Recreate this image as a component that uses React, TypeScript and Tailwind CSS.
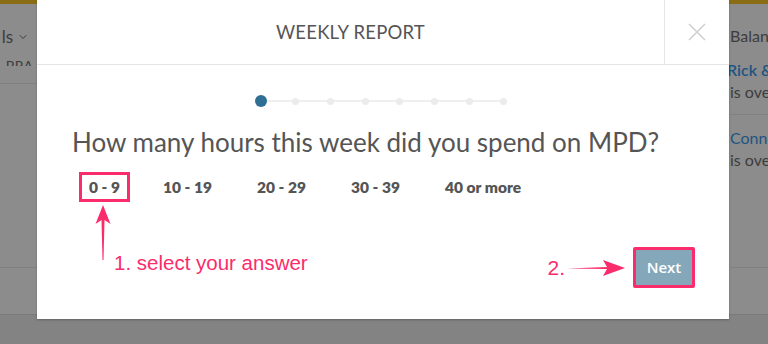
import { ChevronDown } from 'lucide-react'

const options = ['0 - 9', '10 - 19', '20 - 29', '30 - 39', '40 or more']
const steps = [0, 1, 2, 3, 4, 5, 6, 7]

const PINK = '#fb2c6c'

export default function App() {
  return (
    <div className="relative w-[768px] h-[344px] overflow-hidden bg-[#8c8c8c] font-['Lato',sans-serif]">
      {/* page behind the overlay */}
      <div className="h-[4px] bg-[#8a6c12]" />
      <div className="flex h-[310px]">
        <div className="w-[37px] flex flex-col items-end overflow-hidden">
          <div className="flex items-center gap-1 mt-[20px] pr-[8px] text-[17px] text-[#3d3d3d] whitespace-nowrap">
            ls <ChevronDown className="w-3 h-3" strokeWidth={2} />
          </div>
          <div className="h-[8px] mt-[8px] overflow-hidden text-[14px] text-[#3d3d3d] whitespace-nowrap pr-[4px] leading-[16px]">BRA</div>
          <div className="w-full border-b border-[#808080] mt-[17px]" />
          <div className="flex-1" />
          <div className="w-full border-b border-[#808080] mb-[46px]" />
        </div>
        <div className="flex-1" />
        <div className="w-[39px] flex flex-col overflow-hidden pl-[1px] text-[16px] whitespace-nowrap">
          <div className="mt-[20px] text-[#3d3d3d]">Balance</div>
          <div className="mt-[12px] text-[#1f5482] font-semibold leading-[20px] -ml-[3px]">Rick &amp;</div>
          <div className="text-[#3d3d3d] leading-[24px]">is over</div>
          <div className="w-full border-b border-[#808080] mt-[10px]" />
          <div className="mt-[13px] text-[#1f5482] leading-[20px]">Conn</div>
          <div className="text-[#3d3d3d] leading-[24px]">is over</div>
          <div className="flex-1" />
          <div className="w-full border-b border-[#808080] mb-[46px]" />
        </div>
      </div>
      <div className="h-[30px] bg-[#838383] border-t border-[#7a7a7a]" />

      {/* modal */}
      <div className="absolute left-[37px] top-0 w-[692px] h-[319px] bg-white shadow-[0_1px_2px_rgba(0,0,0,0.25)] flex flex-col">
        <div className="flex h-[65px] border-b border-[#e6e6e6]">
          <div className="flex-1 flex items-center justify-center pt-[1px] text-[18.5px] tracking-[0.2px] text-[#555]">WEEKLY REPORT</div>
          <div className="w-[65px] border-l border-[#e6e6e6] flex items-center justify-center">
            <svg width="20" height="20" viewBox="0 0 20 20" stroke="#d0d0d0" strokeWidth="1.6" fill="none">
              <path d="M2 2 L18 18 M18 2 L2 18" />
            </svg>
          </div>
        </div>

        <div className="flex pl-[218px] mt-[30px] h-[12px] items-center">
          <div className="relative flex items-center">
            <div className="absolute left-[6px] right-[3px] h-[2px] bg-[#efefef]" />
            {steps.map(s => (
              <div key={s} className="relative w-[12px] flex justify-center mr-[22.7px] last:mr-0">
                {s === 0 ? (
                  <div className="w-[12px] h-[12px] rounded-full bg-[#2e6f93]" />
                ) : (
                  <div className="w-[7px] h-[7px] rounded-full bg-[#ececec]" />
                )}
              </div>
            ))}
          </div>
        </div>

        <h2 className="mt-[18px] ml-[35px] text-[26px] text-[#555] leading-[34px] whitespace-nowrap">
          How many hours this week did you spend on MPD?
        </h2>

        <div className="flex items-center ml-[42px] mt-[13px]">
          {options.map((o, i) => (
            <div
              key={o}
              className={
                i === 0
                  ? 'px-[7px] py-[3px] border-[3px] border-[#fb2c6c] mr-[33px] text-[15.5px] font-extrabold text-[#555] leading-[18px]'
                  : 'w-[94px] text-[15.5px] font-extrabold text-[#555] leading-[18px] whitespace-nowrap'
              }
            >
              {o}
            </div>
          ))}
        </div>

        <div className="flex items-start justify-between mt-[3px] pr-[34px]">
          <div className="flex items-start ml-[58px]">
            <svg width="16" height="56" viewBox="0 0 16 56">
              <path d="M8 0 L15.5 19 L9.5 15 L8.5 55 L7.5 55 L6.5 15 L0.5 19 Z" fill={PINK} />
            </svg>
            <span className="ml-[3px] mt-[46px] text-[20.5px] text-[#fb2c6c] font-['Liberation_Sans',sans-serif] leading-[24px] whitespace-nowrap">
              1. select your answer
            </span>
          </div>
          <div className="flex items-center mt-[42px]">
            <span className="text-[21px] text-[#fb2c6c] font-['Liberation_Sans',sans-serif]">2.</span>
            <svg width="58" height="20" viewBox="0 0 58 20" className="ml-[2px] mr-[8px]">
              <path d="M0 10.5 L40 9 L36 2 L58 10 L36 18 L40 11 Z" fill={PINK} />
            </svg>
            <button className="w-[62px] h-[41px] border-[3px] border-[#fb2c6c] rounded-[2px] bg-[#84a7ba] text-white text-[15px] font-semibold font-['Open_Sans',sans-serif]">
              Next
            </button>
          </div>
        </div>
      </div>
    </div>
  )
}
